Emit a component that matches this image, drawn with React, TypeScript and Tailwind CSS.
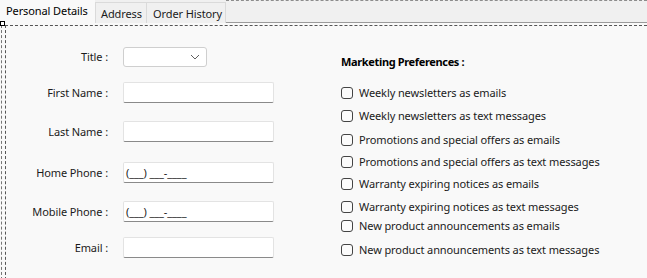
import React from "react";

const fields = [
  { label: "Title :", type: "select", mt: "mt-[21px]" },
  { label: "First Name :", type: "input", mt: "mt-[15px]" },
  { label: "Last Name :", type: "input", mt: "mt-[18px]" },
  { label: "Home Phone :", type: "phone", mt: "mt-[20px]" },
  { label: "Mobile Phone :", type: "phone", mt: "mt-[18px]" },
  { label: "Email :", type: "input", mt: "mt-[15px]" },
];

const prefs = [
  { text: "Weekly newsletters as emails", mt: "mt-[14px]" },
  { text: "Weekly newsletters as text messages", mt: "mt-[5px]" },
  { text: "Promotions and special offers as emails", mt: "mt-[6px]" },
  { text: "Promotions and special offers as text messages", mt: "mt-[4px]" },
  { text: "Warranty expiring notices as emails", mt: "mt-[4px]" },
  { text: "Warranty expiring notices as text messages", mt: "mt-[5px]" },
  { text: "New product announcements as emails", mt: "mt-[1px]" },
  { text: "New product announcements as text messages", mt: "mt-[6px]" },
];

function Field({ type }: { type: string }) {
  if (type === "select") {
    return (
      <div className="w-[84px] h-[20px] bg-white border border-[#cfcfcf] rounded-[3px] flex items-center justify-end pr-[6px]">
        <svg width="10" height="6" viewBox="0 0 10 6">
          <path d="M1 1 L5 5 L9 1" fill="none" stroke="#606060" strokeWidth="1" />
        </svg>
      </div>
    );
  }
  return (
    <div className="w-[151px] h-[21px] bg-white border border-[#e3e3e3] border-b-[#8a8a8a] rounded-[2px] flex items-center pl-[2px] text-[#1a1a1a] whitespace-nowrap">
      {type === "phone" ? "(___) ___-____" : ""}
    </div>
  );
}

export default function App() {
  return (
    <div className="w-[647px] h-[278px] bg-[#f9f9f9] overflow-hidden relative text-[11px] leading-[16px] tracking-[-0.1px] text-[#1b1b1b] font-['Noto_Sans',sans-serif] whitespace-nowrap">
      <div className="h-[23px] bg-[#f0f0f0] flex items-end">
        <div className="w-[95px] h-[23px] bg-[#f9f9f9] pl-[6px] pt-[3px] text-[#000]">Personal Details</div>
        <div className="w-[51px] h-[21px] border-l border-t border-[#dadada] pl-[5px] pt-[3px] bg-[#f0f0f0]">Address</div>
        <div className="w-[80px] h-[21px] border-l border-r border-t border-[#dadada] pl-[6px] pt-[3px] bg-[#f0f0f0]">Order History</div>
        <div className="flex-1 h-[23px] border-t border-dashed border-[#8c8c8c]">
          <div className="h-full border-b border-[#9a9a9a]" />
        </div>
      </div>
      <div className="absolute left-0 top-[21px] w-[5px] h-[5px] border border-black bg-white" />
      <div className="h-[255px] ml-[1px] border-l border-dashed border-[#777]">
        <div className="h-full ml-[3px] mt-[2px] border-l border-t border-dashed border-[#555] flex">
          <div className="flex flex-col w-[269px]">
            {fields.map((f) => (
              <div key={f.label} className={`flex items-center ${f.mt}`}>
                <div className="w-[102px] text-right">{f.label}</div>
                <div className="ml-[15px]">
                  <Field type={f.type} />
                </div>
              </div>
            ))}
          </div>
          <div className="ml-[66px] flex flex-col">
            <div className="mt-[28px] font-bold h-[16px] tracking-[-0.35px] text-black">Marketing Preferences :</div>
            {prefs.map((p) => (
              <div key={p.text} className={`flex items-center h-[18px] ${p.mt}`}>
                <div className="w-[12px] h-[12px] border border-[#444] rounded-[3px] bg-[#fbfbfb]" />
                <div className="ml-[6px]">{p.text}</div>
              </div>
            ))}
          </div>
        </div>
      </div>
    </div>
  );
}
